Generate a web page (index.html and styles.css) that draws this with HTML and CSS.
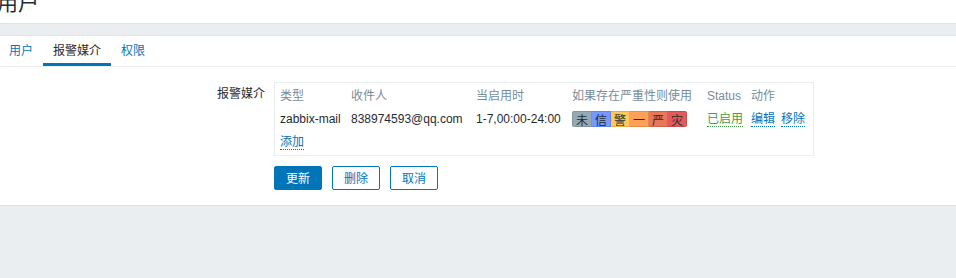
FILE: index.html
```html
<!DOCTYPE html>
<html lang="zh-CN">
<head>
<meta charset="utf-8">
<title>用户</title>
<link rel="stylesheet" href="styles.css">
</head>
<body>
<header class="page-header">
  <h1 class="page-title">用户</h1>
</header>
<div class="band"></div>
<main class="panel">
  <nav class="tabs">
    <a class="tab">用户</a>
    <a class="tab active">报警媒介</a>
    <a class="tab">权限</a>
  </nav>
  <div class="form">
    <div class="form-row">
      <div class="form-label">报警媒介</div>
      <div class="form-field">
        <div class="media-box">
          <table class="media-table">
            <colgroup>
              <col class="c1"><col class="c2"><col class="c3"><col class="c4"><col class="c5"><col class="c6">
            </colgroup>
            <thead>
              <tr><th>类型</th><th>收件人</th><th>当启用时</th><th>如果存在严重性则使用</th><th>Status</th><th>动作</th></tr>
            </thead>
            <tbody>
              <tr>
                <td>zabbix-mail</td>
                <td>838974593@qq.com</td>
                <td>1-7,00:00-24:00</td>
                <td>
                  <div class="sev">
                    <span class="s s0">未</span><span class="s s1">信</span><span class="s s2">警</span><span class="s s3">一</span><span class="s s4">严</span><span class="s s5">灾</span>
                  </div>
                </td>
                <td><a class="link green">已启用</a></td>
                <td class="actions"><a class="link">编辑</a><a class="link">移除</a></td>
              </tr>
              <tr>
                <td colspan="6"><a class="link">添加</a></td>
              </tr>
            </tbody>
          </table>
        </div>
        <div class="buttons">
          <button class="btn primary">更新</button>
          <button class="btn alt">删除</button>
          <button class="btn alt">取消</button>
        </div>
      </div>
    </div>
  </div>
</main>
</body>
</html>
```

FILE: styles.css
```css
* { box-sizing: border-box; }
html, body {
  margin: 0;
  padding: 0;
  background: #ebeef0;
  font-family: "Liberation Sans", Arial, "Noto Sans CJK SC", sans-serif;
  font-size: 12px;
  color: #1f2c33;
}
.page-header {
  height: 24px;
  background: #fff;
  overflow: hidden;
  border-bottom: 1px solid #dfe4e7;
}
.page-title {
  margin: -9px 0 0 -3px;
  font-size: 21px;
  line-height: 21px;
  font-weight: normal;
  font-family: "Noto Sans CJK SC", sans-serif;
  color: #1f2c33;
}
.band {
  height: 12px;
  background: #ebeef0;
  border-bottom: 1px solid #dfe4e7;
}
.panel {
  background: #fff;
  border-bottom: 1px solid #dfe4e7;
  padding-bottom: 15px;
}
.tabs {
  display: flex;
  border-bottom: 1px solid #ebeef0;
  height: 31px;
  margin-left: -1px;
}
.tab {
  display: block;
  padding: 0 10px;
  height: 30px;
  line-height: 27px;
  color: #0275b8;
  font-family: "Noto Sans CJK SC", sans-serif;
  font-size: 12px;
  border-bottom: 3px solid transparent;
}
.tab.active {
  color: #1f2c33;
  border-bottom-color: #0275b8;
}
.form {
  padding-top: 15px;
}
.form-row {
  display: flex;
  gap: 9px;
}
.form-label {
  width: 265px;
  text-align: right;
  padding-top: 4px;
  line-height: 14px;
  font-family: "Noto Sans CJK SC", sans-serif;
}
.form-field {
  display: flex;
  flex-direction: column;
}
.media-box {
  width: 540px;
  border: 1px solid #ebeef0;
  padding: 0 0 2px 0;
}
.media-table {
  border-collapse: collapse;
  table-layout: fixed;
  width: 538px;
}
.media-table col.c1 { width: 71px; }
.media-table col.c2 { width: 125px; }
.media-table col.c3 { width: 96px; }
.media-table col.c4 { width: 135px; }
.media-table col.c5 { width: 44px; }
.media-table col.c6 { width: 67px; }
.media-table th,
.media-table td {
  padding: 0 0 0 5px;
  height: 23px;
  text-align: left;
  white-space: nowrap;
  vertical-align: middle;
  font-weight: normal;
  line-height: 14px;
}
.media-table thead th {
  color: #768d99;
  height: 24px;
  padding-top: 1px;
}
.sev {
  display: flex;
  width: 115px;
  height: 16px;
  border-radius: 2px;
  overflow: hidden;
  font-family: "Noto Sans CJK SC", sans-serif;
}
.s {
  flex: 1;
  text-align: center;
  line-height: 15px;
  font-size: 12px;
  color: #1f2c33;
  border: 1px solid rgba(0, 0, 0, 0.12);
  border-left-width: 0;
}
.s:first-child { border-left-width: 1px; }
.s0 { background: #97aab3; }
.s1 { background: #7499ff; }
.s2 { background: #ffc859; }
.s3 { background: #ffa059; }
.s4 { background: #e97659; }
.s5 { background: #e45959; }
.link {
  color: #0275b8;
  text-decoration: none;
  border-bottom: 1px dotted #0275b8;
  cursor: pointer;
  font-family: "Noto Sans CJK SC", sans-serif;
  line-height: 16px;
  display: inline-block;
}
.link.green {
  color: #429e47;
  border-bottom-color: #429e47;
}
.actions .link + .link { margin-left: 6px; }
.buttons {
  display: flex;
  gap: 10px;
  margin-top: 10px;
}
.btn {
  height: 24px;
  padding: 0 11px;
  font-size: 12px;
  font-family: "Noto Sans CJK SC", sans-serif;
  border-radius: 2px;
  border: 1px solid #0275b8;
  line-height: 20px;
  cursor: pointer;
}
.btn.primary {
  background: #0275b8;
  color: #fff;
}
.btn.alt {
  background: #fff;
  color: #0275b8;
}
```
